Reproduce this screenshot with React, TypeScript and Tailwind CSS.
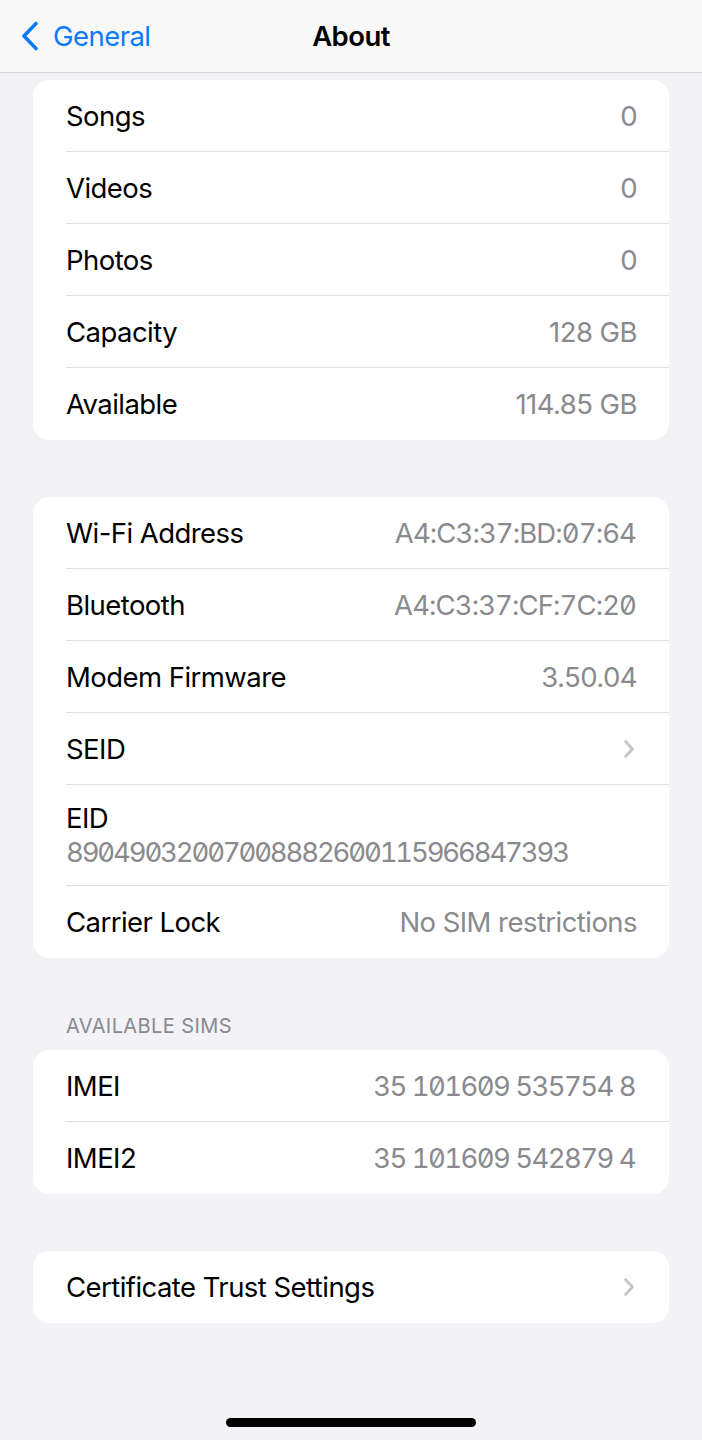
import React from "react";

const Chevron = () => (
  <svg width="12" height="20" viewBox="0 0 12 20" fill="none" className="shrink-0">
    <path d="M2.5 2.5 L9.5 10 L2.5 17.5" stroke="#c4c4c7" strokeWidth="2.6" strokeLinecap="round" strokeLinejoin="round" />
  </svg>
);

type RowProps = { label: string; value?: string; valueClass?: string; chevron?: boolean; last?: boolean };

const Row = ({ label, value, valueClass, chevron, last }: RowProps) => (
  <div className={`ml-[33px] pr-[32px] h-[72px] flex items-center justify-between ${last ? "" : "border-b border-[#e1e1e4]"}`}>
    <span className="text-black">{label}</span>
    {value !== undefined && (
      <span className={`text-[#8a8a8e] whitespace-nowrap ${valueClass ?? ""}`}>{value}</span>
    )}
    {chevron && <span className="mr-[2px]"><Chevron /></span>}
  </div>
);

const Card = ({ children }: { children: React.ReactNode }) => (
  <div className="bg-white rounded-[16px] overflow-hidden">{children}</div>
);

export default function App() {
  return (
    <div className="w-full h-[1440px] bg-[#f2f2f7] flex flex-col font-['Inter',sans-serif] text-[27.5px] leading-[34px] tracking-[-0.55px] overflow-hidden">
      <header className="h-[73px] shrink-0 bg-[#f8f8f9] border-b border-[#d3d3d7] grid grid-cols-[1fr_auto_1fr] items-center">
        <div className="flex items-center pl-[20px] gap-[13px] text-[#0a7aff]">
          <svg width="20" height="30" viewBox="0 0 20 30" fill="none">
            <path d="M16 2.5 L4 15 L16 27.5" stroke="#0a7aff" strokeWidth="3.6" strokeLinecap="round" strokeLinejoin="round" />
          </svg>
          <span>General</span>
        </div>
        <div className="font-semibold text-black">About</div>
        <div />
      </header>

      <main className="px-[33px] pt-[7px] flex flex-col">
        <Card>
          <Row label="Songs" value="0" />
          <Row label="Videos" value="0" />
          <Row label="Photos" value="0" />
          <Row label="Capacity" value="128 GB" />
          <Row label="Available" value="114.85 GB" last />
        </Card>

        <div className="h-[57px]" />

        <Card>
          <Row label="Wi-Fi Address" value="A4:C3:37:BD:07:64" valueClass="tabular-nums slashed-zero tracking-[-0.9px] mr-[1px]" />
          <Row label="Bluetooth" value="A4:C3:37:CF:7C:20" valueClass="tabular-nums slashed-zero tracking-[-0.9px] mr-[1px]" />
          <Row label="Modem Firmware" value="3.50.04" />
          <Row label="SEID" chevron />
          <div className="ml-[33px] pr-[32px] pt-[16px] pb-[16px] flex flex-col border-b border-[#e1e1e4]">
            <span className="text-black">EID</span>
            <span className="text-[#8a8a8e] tabular-nums slashed-zero tracking-[-2.15px] whitespace-nowrap">89049032007008882600115966847393</span>
          </div>
          <Row label="Carrier Lock" value="No SIM restrictions" last />
        </Card>

        <div className="pt-[55px] pb-[11px] pl-[33px] text-[20px] leading-[26px] tracking-[0.4px] text-[#8a8a8e]">
          AVAILABLE SIMS
        </div>

        <Card>
          <Row label="IMEI" value="35 101609 535754 8" valueClass="tabular-nums slashed-zero tracking-[-1.55px] mr-[2px]" />
          <Row label="IMEI2" value="35 101609 542879 4" valueClass="tabular-nums slashed-zero tracking-[-1.55px] mr-[2px]" last />
        </Card>

        <div className="h-[57px]" />

        <Card>
          <Row label="Certificate Trust Settings" chevron last />
        </Card>
      </main>

      <div className="mt-auto mb-[13px] self-center w-[250px] h-[9px] rounded-full bg-black" />
    </div>
  );
}
